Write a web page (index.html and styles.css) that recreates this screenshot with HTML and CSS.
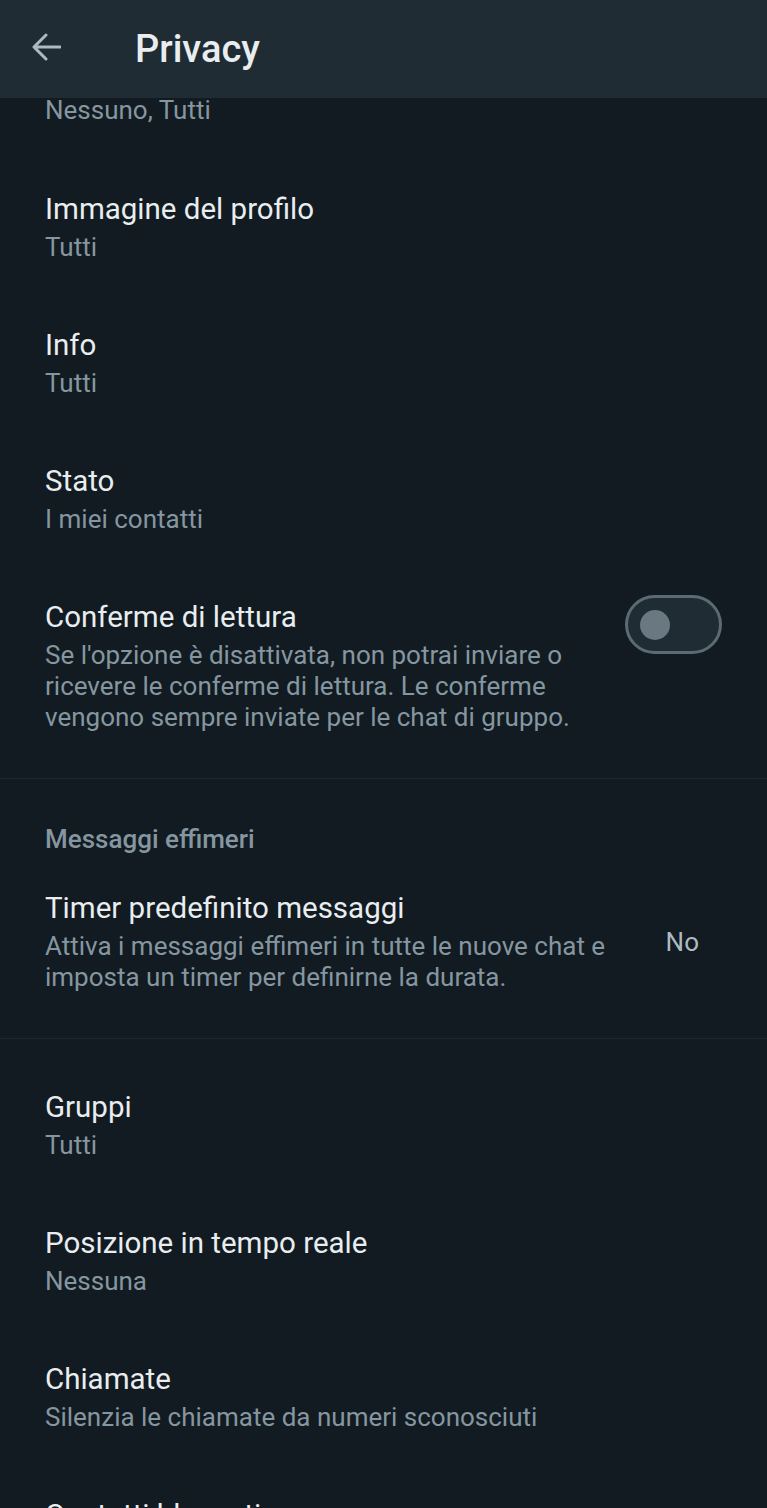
FILE: index.html
```html
<!DOCTYPE html>
<html lang="it">
<head>
    <meta charset="UTF-8">
    <meta name="viewport" content="width=device-width, initial-scale=1.0">
    <title>Privacy</title>
    <link rel="stylesheet" href="styles.css">
</head>
<body>
    <div class="screen">
        <header class="app-bar">
            <svg class="back" viewBox="0 0 30 28" width="30" height="28" aria-hidden="true">
                <path d="M29 14H3M15 2L3 14l12 12" fill="none" stroke="#aebac1" stroke-width="3" stroke-linecap="round" stroke-linejoin="round"/>
            </svg>
            <h1>Privacy</h1>
        </header>

        <div class="list">
            <!-- scrolled: only the value of the first entry is still visible -->
            <div class="row first">
                <div class="row-text">
                    <div class="sub">Nessuno, Tutti</div>
                </div>
            </div>

            <div class="row">
                <div class="row-text">
                    <div class="title">Immagine del profilo</div>
                    <div class="sub">Tutti</div>
                </div>
            </div>

            <div class="row">
                <div class="row-text">
                    <div class="title">Info</div>
                    <div class="sub">Tutti</div>
                </div>
            </div>

            <div class="row">
                <div class="row-text">
                    <div class="title">Stato</div>
                    <div class="sub">I miei contatti</div>
                </div>
            </div>

            <div class="row">
                <div class="row-text">
                    <div class="title">Conferme di lettura</div>
                    <div class="sub">Se l'opzione è disattivata, non potrai inviare o ricevere le conferme di lettura. Le conferme vengono sempre inviate per le chat di gruppo.</div>
                </div>
                <div class="switch"><span class="knob"></span></div>
            </div>

            <div class="divider"></div>

            <div class="section">Messaggi effimeri</div>

            <div class="row">
                <div class="row-text">
                    <div class="title">Timer predefinito messaggi</div>
                    <div class="sub">Attiva i messaggi effimeri in tutte le nuove chat e imposta un timer per definirne la durata.</div>
                </div>
                <div class="value">No</div>
            </div>

            <div class="divider"></div>

            <div class="row">
                <div class="row-text">
                    <div class="title">Gruppi</div>
                    <div class="sub">Tutti</div>
                </div>
            </div>

            <div class="row">
                <div class="row-text">
                    <div class="title">Posizione in tempo reale</div>
                    <div class="sub">Nessuna</div>
                </div>
            </div>

            <div class="row">
                <div class="row-text">
                    <div class="title">Chiamate</div>
                    <div class="sub">Silenzia le chiamate da numeri sconosciuti</div>
                </div>
            </div>

            <div class="row">
                <div class="row-text">
                    <div class="title">Contatti bloccati</div>
                    <div class="sub">12</div>
                </div>
            </div>
        </div>
    </div>
</body>
</html>
```

FILE: styles.css
```css
body {
    margin: 0;
    background-color: #111b21;
    font-family: Roboto, "Noto Sans", sans-serif;
    color: #e9edef;
}

.screen {
    height: 1508px;
    display: flex;
    flex-direction: column;
    overflow: hidden;
}

.app-bar {
    flex-shrink: 0;
    height: 98px;
    background-color: #1f2c33;
    display: flex;
    align-items: center;
    padding-left: 31px;
    box-sizing: border-box;
}

.back {
    margin-top: -4px;
    flex-shrink: 0;
}

.app-bar h1 {
    margin: 0 0 0 74px;
    font-size: 38px;
    font-weight: 500;
    color: #e9edef;
    line-height: 1;
}

.list {
    flex: 1;
    overflow: hidden;
}

.row {
    display: flex;
    align-items: flex-start;
    padding: 34px 45px 29px;
}

.row.first {
    padding-top: 0;
    padding-bottom: 34px;
    margin-top: -4px;
}

.row.first .sub {
    line-height: 24px;
}

.row-text {
    flex: 1;
    min-width: 0;
}

.title {
    font-size: 29.5px;
    line-height: 38px;
    color: #e9edef;
}

.sub {
    margin-top: 4px;
    font-size: 26px;
    line-height: 31px;
    color: #8696a0;
}

.switch {
    flex-shrink: 0;
    width: 97px;
    height: 59px;
    margin: -3px 0 0 40px;
    box-sizing: border-box;
    border: 3px solid #5b6a73;
    border-radius: 30px;
    background-color: #1f2c33;
    display: flex;
    align-items: center;
    padding-left: 12px;
}

.knob {
    width: 30px;
    height: 30px;
    border-radius: 50%;
    background-color: #6a7981;
}

.value {
    flex-shrink: 0;
    margin: 38px 23px 0 40px;
    font-size: 26px;
    line-height: 31px;
    color: #aebac1;
}

.divider {
    height: 1px;
    background-color: #1c272d;
    margin: 16px 0 15px;
}

.section {
    padding: 29px 45px 0;
    font-size: 26px;
    line-height: 32px;
    font-weight: 500;
    color: #8696a0;
}
```
